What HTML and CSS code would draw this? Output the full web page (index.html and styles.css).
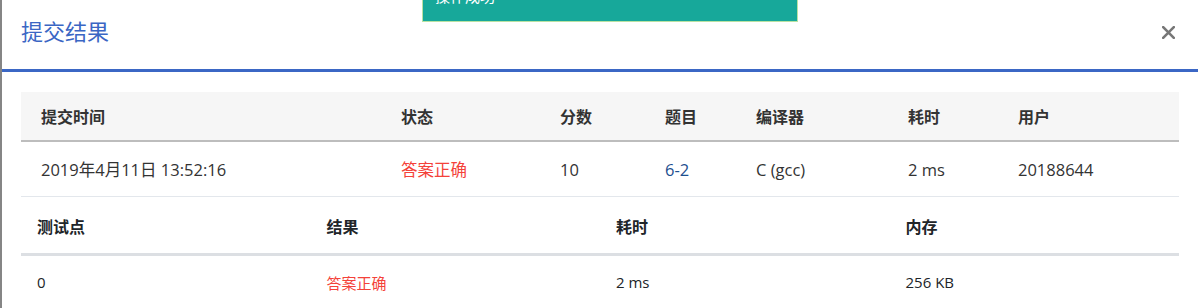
FILE: index.html
```html
<!DOCTYPE html>
<html lang="zh-CN">
<head>
<meta charset="utf-8">
<title>提交结果</title>
<link rel="stylesheet" href="styles.css">
</head>
<body>
<div class="modal">
  <div class="modal-header">
    <h4 class="modal-title">提交结果</h4>
    <button class="close" type="button" aria-label="Close">
      <svg width="13" height="13" viewBox="0 0 13 13"><path d="M1.2 1.2 L11.8 11.8 M11.8 1.2 L1.2 11.8" stroke="#777" stroke-width="2.6" stroke-linecap="square" fill="none"/></svg>
    </button>
  </div>
  <div class="modal-body">
    <div class="summary">
      <div class="s-row s-head">
        <div class="cell">提交时间</div>
        <div class="cell">状态</div>
        <div class="cell">分数</div>
        <div class="cell">题目</div>
        <div class="cell">编译器</div>
        <div class="cell">耗时</div>
        <div class="cell">用户</div>
      </div>
      <div class="s-row s-body">
        <div class="cell">2019年4月11日 13:52:16</div>
        <div class="cell accepted">答案正确</div>
        <div class="cell">10</div>
        <div class="cell"><a class="problem-link" href="#">6-2</a></div>
        <div class="cell">C (gcc)</div>
        <div class="cell">2 ms</div>
        <div class="cell">20188644</div>
      </div>
    </div>
    <div class="cases">
      <div class="c-row c-head">
        <div class="cell">测试点</div>
        <div class="cell">结果</div>
        <div class="cell">耗时</div>
        <div class="cell">内存</div>
      </div>
      <div class="c-row c-body">
        <div class="cell">0</div>
        <div class="cell accepted">答案正确</div>
        <div class="cell">2 ms</div>
        <div class="cell">256 KB</div>
      </div>
    </div>
  </div>
</div>
<div class="toast">操作成功</div>
</body>
</html>
```

FILE: styles.css
```css
html, body {
  margin: 0;
  padding: 0;
  background: #ffffff;
  overflow: hidden;
}

body {
  font-family: "Open Sans", "Noto Sans CJK SC", sans-serif;
  color: #333333;
  width: 1198px;
  height: 308px;
}

.modal {
  height: 308px;
  border-left: 2px solid #858585;
  background: #ffffff;
}

.modal-header {
  display: flex;
  align-items: center;
  justify-content: space-between;
  padding: 0 23px 6px 19px;
  border-bottom: 3px solid #3b67c5;
  box-sizing: content-box;
  height: 63px;
}

.modal-title {
  margin: 0 0 4px 0;
  font-family: "Noto Sans CJK SC", sans-serif;
  font-weight: 400;
  font-size: 22px;
  line-height: 26px;
  color: #3a66c4;
}

.close {
  border: 0;
  background: transparent;
  padding: 0;
  width: 13px;
  height: 13px;
  display: flex;
  cursor: pointer;
  margin-top: 2px;
}

.modal-body {
  padding: 20px 19px 0 19px;
}

.cell {
  display: flex;
  align-items: center;
  white-space: nowrap;
}

.summary {
  font-size: 16px;
}

.s-row {
  display: grid;
  grid-template-columns: 360px 159px 105px 91px 152px 110px 1fr;
}

.s-row .cell {
  padding-left: 20px;
}

.s-head {
  height: 48px;
  background: #f6f6f6;
  border-bottom: 2px solid #bdbdbd;
  font-weight: 700;
  color: #333333;
}

.s-head .cell {
  font-family: "Noto Sans CJK SC", sans-serif;
}

.s-body {
  height: 54px;
  border-bottom: 1px solid #e3e7ec;
  color: #333333;
  font-size: 16.5px;
}

.accepted {
  color: #f4423a;
  font-family: "Noto Sans CJK SC", sans-serif;
}

.problem-link {
  color: #1d4f8f;
  text-decoration: none;
}

.cases {
  font-size: 15px;
}

.c-row {
  display: grid;
  grid-template-columns: repeat(4, 1fr);
}

.c-row .cell {
  padding-left: 16px;
}

.c-head {
  height: 56px;
  border-bottom: 3px solid #dcdfe3;
  font-family: "Noto Sans CJK SC", sans-serif;
  font-weight: 700;
  font-size: 16px;
  color: #212529;
}

.c-head .cell {
  padding-top: 2px;
}

.c-body {
  height: 52px;
  color: #212529;
}

.toast {
  position: fixed;
  top: -26px;
  left: 422px;
  width: 350px;
  height: 35px;
  padding: 12px 12px 0 12px;
  background: #17a89a;
  border: 1px solid #b9e2a3;
  border-top: 0;
  color: #ffffff;
  font-family: "Noto Sans CJK SC", sans-serif;
  font-size: 15px;
  line-height: 20px;
}
```
